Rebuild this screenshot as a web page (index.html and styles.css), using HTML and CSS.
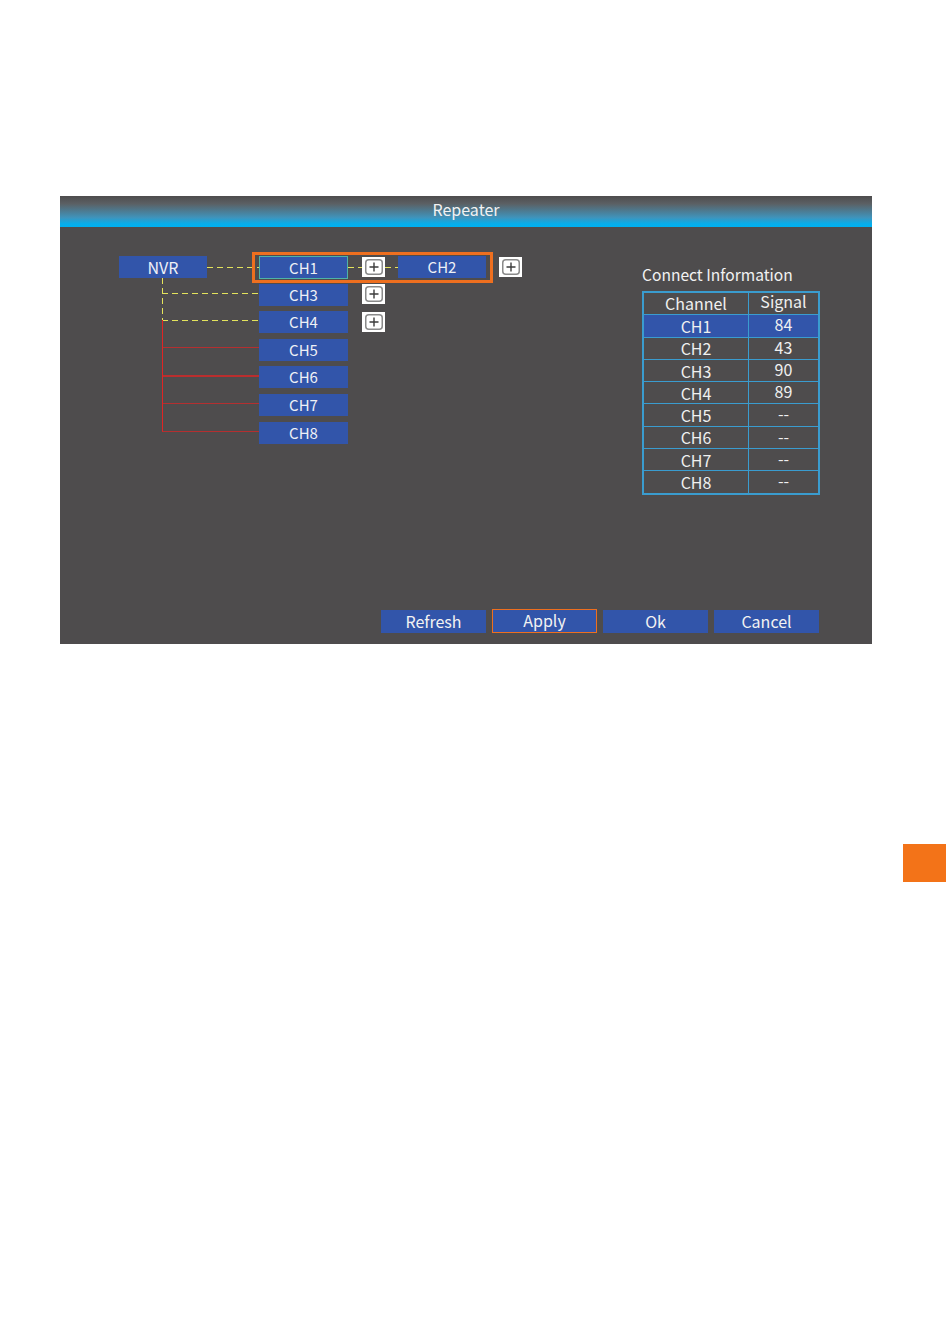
FILE: index.html
```html
<!DOCTYPE html>
<html>
<head>
    <title>Repeater</title>
    <link rel="stylesheet" href="styles.css">
</head>
<body>
    <div class="page">
        <div class="panel">
            <div class="title-bar">Repeater</div>
            <div class="panel-body">
                <div class="top-row">
                    <div class="diagram">
                        <svg class="wires" width="520" height="230" viewBox="0 0 520 230">
                            <g stroke="#e4e45c" stroke-width="1" stroke-dasharray="6 4" fill="none">
                                <line x1="147" y1="40.5" x2="199" y2="40.5"/>
                                <line x1="288" y1="40.5" x2="302" y2="40.5"/>
                                <line x1="325" y1="40.5" x2="338" y2="40.5"/>
                                <line x1="102.5" y1="51" x2="102.5" y2="93"/>
                                <line x1="102" y1="66.5" x2="199" y2="66.5"/>
                                <line x1="102" y1="93.5" x2="199" y2="93.5"/>
                            </g>
                            <g stroke="#e02424" fill="none">
                                <line x1="102.5" y1="93" x2="102.5" y2="204.5" stroke-width="1"/>
                                <line x1="102" y1="120.5" x2="199" y2="120.5" stroke-width="1" stroke-opacity="0.7"/>
                                <line x1="102" y1="149" x2="199" y2="149" stroke-width="1.5"/>
                                <line x1="102" y1="176.5" x2="199" y2="176.5" stroke-width="1" stroke-opacity="0.7"/>
                                <line x1="102" y1="204.5" x2="199" y2="204.5" stroke-width="1" stroke-opacity="0.7"/>
                            </g>
                        </svg>

                        <div class="node nvr">NVR</div>
                        <div class="select-frame"></div>
                        <div class="node ch ch-active" style="top: 29px">CH1</div>
                        <div class="node ch" style="top: 57px">CH3</div>
                        <div class="node ch" style="top: 84px">CH4</div>
                        <div class="node ch" style="top: 112px">CH5</div>
                        <div class="node ch" style="top: 139px">CH6</div>
                        <div class="node ch" style="top: 167px">CH7</div>
                        <div class="node ch" style="top: 195px">CH8</div>
                        <div class="node ch2">CH2</div>

                        <div class="add-btn" style="left: 302px; top: 30px">
                            <svg width="18" height="16" viewBox="0 0 18 16"><rect x="0.75" y="0.75" width="16.5" height="14.5" rx="3" fill="none" stroke="#8a8a8a" stroke-width="1.5"/><path d="M9 3.5v9M4.5 8h9" stroke="#3c3c3c" stroke-width="1.4"/></svg>
                        </div>
                        <div class="add-btn" style="left: 439px; top: 30px">
                            <svg width="18" height="16" viewBox="0 0 18 16"><rect x="0.75" y="0.75" width="16.5" height="14.5" rx="3" fill="none" stroke="#8a8a8a" stroke-width="1.5"/><path d="M9 3.5v9M4.5 8h9" stroke="#3c3c3c" stroke-width="1.4"/></svg>
                        </div>
                        <div class="add-btn" style="left: 302px; top: 57px">
                            <svg width="18" height="16" viewBox="0 0 18 16"><rect x="0.75" y="0.75" width="16.5" height="14.5" rx="3" fill="none" stroke="#8a8a8a" stroke-width="1.5"/><path d="M9 3.5v9M4.5 8h9" stroke="#3c3c3c" stroke-width="1.4"/></svg>
                        </div>
                        <div class="add-btn" style="left: 302px; top: 85px">
                            <svg width="18" height="16" viewBox="0 0 18 16"><rect x="0.75" y="0.75" width="16.5" height="14.5" rx="3" fill="none" stroke="#8a8a8a" stroke-width="1.5"/><path d="M9 3.5v9M4.5 8h9" stroke="#3c3c3c" stroke-width="1.4"/></svg>
                        </div>
                    </div>

                    <div class="info">
                        <p class="info-title">Connect Information</p>
                        <table class="info-table">
                            <tr><th>Channel</th><th class="sig">Signal</th></tr>
                            <tr class="row-active"><td>CH1</td><td class="sig">84</td></tr>
                            <tr><td>CH2</td><td class="sig">43</td></tr>
                            <tr><td>CH3</td><td class="sig">90</td></tr>
                            <tr><td>CH4</td><td class="sig">89</td></tr>
                            <tr><td>CH5</td><td class="sig">--</td></tr>
                            <tr><td>CH6</td><td class="sig">--</td></tr>
                            <tr><td>CH7</td><td class="sig">--</td></tr>
                            <tr><td>CH8</td><td class="sig">--</td></tr>
                        </table>
                    </div>
                </div>

                <div class="buttons">
                    <button class="btn">Refresh</button>
                    <button class="btn btn-focus">Apply</button>
                    <button class="btn">Ok</button>
                    <button class="btn">Cancel</button>
                </div>
            </div>
        </div>

        <div class="page-tab"></div>
    </div>
</body>
</html>
```

FILE: styles.css
```css
body {
    margin: 0;
    background-color: #ffffff;
    font-family: "Noto Sans CJK SC", "Noto Sans", sans-serif;
}

.page {
    width: 946px;
    height: 1324px;
    padding-top: 196px;
    box-sizing: border-box;
    display: flex;
    flex-direction: column;
}

.panel {
    margin-left: 60px;
    width: 812px;
    height: 448px;
    background-color: #4e4c4d;
    display: flex;
    flex-direction: column;
}

.title-bar {
    height: 31px;
    line-height: 27px;
    text-align: center;
    color: #f2f2f2;
    font-size: 16px;
    background: linear-gradient(to bottom, #4e4c4d 0%, #5b6064 25%, #3f94bc 70%, #05aeec 90%, #00b0f0 100%);
}

.panel-body {
    flex: 1;
    display: flex;
    flex-direction: column;
}

.top-row {
    display: flex;
}

.diagram {
    position: relative;
    width: 582px;
    height: 230px;
    flex-shrink: 0;
}

.wires {
    position: absolute;
    left: 0;
    top: 0;
}

.node {
    position: absolute;
    height: 22px;
    line-height: 22px;
    text-align: center;
    color: #eef0f6;
    font-size: 15px;
    background-color: #3255aa;
    box-sizing: border-box;
}

.nvr {
    left: 59px;
    top: 29px;
    width: 88px;
    font-size: 16px;
}

.ch {
    left: 199px;
    width: 89px;
}

.ch-active {
    height: 23px;
    line-height: 21px;
    border: 1px solid #4fb3a6;
}

.ch2 {
    left: 338px;
    top: 29px;
    width: 88px;
}

.select-frame {
    position: absolute;
    left: 192px;
    top: 25px;
    width: 241px;
    height: 31px;
    border: 3px solid #ee6f1f;
    box-sizing: border-box;
}

.add-btn {
    position: absolute;
    width: 23px;
    height: 20px;
    background-color: #ffffff;
    display: flex;
    align-items: center;
    justify-content: center;
}

.add-btn svg {
    display: block;
}

.info {
    padding-top: 36px;
}

.info-title {
    margin: 0 0 6px 0;
    color: #f2f2f2;
    font-size: 15.6px;
    line-height: 22px;
}

.info-table {
    border-collapse: collapse;
    border: 2px solid #3a9ccf;
    color: #f0f0f0;
    font-size: 16px;
}

.info-table th,
.info-table td {
    border: 1px solid #3a9ccf;
    height: 21.3px;
    padding: 0;
    text-align: center;
    font-weight: normal;
    line-height: 18px;
    vertical-align: middle;
}

.info-table th {
    width: 104px;
    vertical-align: top;
    line-height: 20px;
}

.info-table th.sig {
    width: 69px;
    line-height: 17px;
}

.info-table td.sig {
    vertical-align: top;
    font-size: 16px;
}

.row-active td {
    background-color: #3255aa;
}

.buttons {
    margin-top: auto;
    margin-bottom: 11px;
    padding-left: 321px;
    display: flex;
    gap: 6px;
}

.btn {
    width: 105px;
    height: 23px;
    padding: 0 0 2px 0;
    border: none;
    background-color: #3255aa;
    color: #f2f2f2;
    font-family: "Noto Sans CJK SC", "Noto Sans", sans-serif;
    font-size: 16px;
    line-height: 20px;
}

.btn-focus {
    height: 24px;
    margin-top: -1px;
    padding-bottom: 4px;
    border: 1px solid #ee6f1f;
}

.page-tab {
    margin-top: 200px;
    margin-left: 903px;
    width: 43px;
    height: 38px;
    background-color: #f37318;
}
```
